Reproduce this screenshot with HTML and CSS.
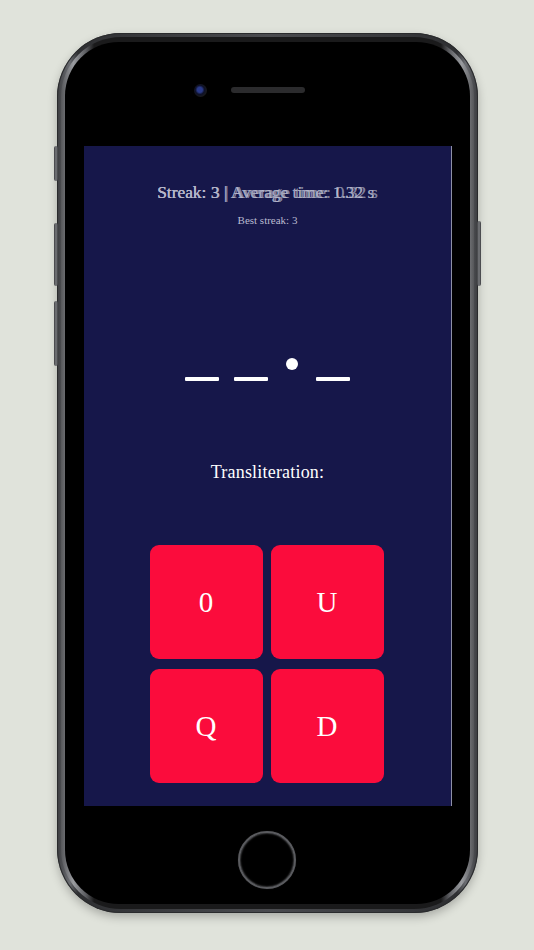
FILE: index.html
```html
<!DOCTYPE html>
<html>
<head>
<meta charset="utf-8">
<link rel="stylesheet" href="styles.css">
</head>
<body>
<div class="stage">
  <div class="phone">
    <span class="btn btn-mute"></span>
    <span class="btn btn-volup"></span>
    <span class="btn btn-voldown"></span>
    <span class="btn btn-power"></span>
    <div class="bezel">
      <div class="face">
        <div class="top">
          <span class="camera"></span>
          <span class="speaker"></span>
        </div>
        <div class="screen">
          <div class="stats">
            <div class="stat-line ghost-a">Streak: 3 | Average time: 1.32 s</div>
            <div class="stat-line ghost-b">Streak: 3 | Average time: 0.32 s</div>
          </div>
          <div class="best">Best streak: 3</div>
          <div class="morse">
            <span class="dash"></span>
            <span class="dash"></span>
            <span class="dot"></span>
            <span class="dash"></span>
          </div>
          <div class="label">Transliteration:</div>
          <div class="answers">
            <button class="tile">0</button>
            <button class="tile">U</button>
            <button class="tile">Q</button>
            <button class="tile">D</button>
          </div>
        </div>
        <div class="bottom">
          <span class="home"></span>
        </div>
      </div>
    </div>
  </div>
</div>
</body>
</html>
```
FILE: styles.css
```css
html, body {
  margin: 0;
  padding: 0;
  background: #e0e3db;
}
body {
  width: 534px;
  height: 950px;
  overflow: hidden;
  font-family: "Liberation Serif", "DejaVu Serif", serif;
}
.stage {
  display: flex;
  justify-content: center;
  padding-top: 33px;
}
.phone {
  position: relative;
  width: 421px;
  height: 880px;
  border-radius: 64px;
  background: linear-gradient(90deg, #3a3b3e 0%, #6b6d72 3%, #2e2f32 5%, #4a4b4f 50%, #2e2f32 95%, #6b6d72 97%, #3a3b3e 100%);
  box-shadow: 0 4px 10px rgba(0,0,0,0.25), inset 0 0 0 1px #2a2b2d;
  padding: 4px;
  box-sizing: border-box;
}
.btn {
  position: absolute;
  width: 4px;
  background: linear-gradient(90deg, #3c3d40, #7a7c80, #3c3d40);
  border-radius: 2px;
}
.btn-mute { left: -3px; top: 113px; height: 35px; }
.btn-volup { left: -3px; top: 190px; height: 63px; }
.btn-voldown { left: -3px; top: 268px; height: 65px; }
.btn-power { right: -3px; top: 188px; height: 65px; }
.bezel {
  height: 100%;
  border-radius: 60px;
  background: linear-gradient(90deg, #555659 0%, #9a9ca0 3%, #5c5d61 6%, #1a1a1b 8%, #1a1a1b 92%, #5c5d61 94%, #9a9ca0 97%, #555659 100%);
  padding: 5px 4px;
  box-sizing: border-box;
}
.face {
  height: 100%;
  border-radius: 54px;
  background: #000;
  display: flex;
  flex-direction: column;
  align-items: center;
  padding: 0 10px;
  box-sizing: border-box;
}
.top {
  height: 104px;
  width: 100%;
  display: flex;
  justify-content: center;
  align-items: center;
  gap: 24px;
  padding: 0 36px 8px 0;
  box-sizing: border-box;
}
.camera {
  width: 13px;
  height: 13px;
  border-radius: 50%;
  background: radial-gradient(circle at 45% 45%, #2a3a8a 0 25%, #0e1128 45%, #1a1a1c 70%);
}
.speaker {
  width: 74px;
  height: 6px;
  border-radius: 3px;
  background: #2b2b2d;
}
.screen {
  width: 368px;
  height: 660px;
  margin-left: 2px;
  background: #16174a;
  border-right: 1px solid #8e90a6;
  box-sizing: border-box;
  display: flex;
  flex-direction: column;
  align-items: center;
  padding-top: 36px;
}
.stats {
  display: grid;
}
.stat-line {
  grid-area: 1 / 1;
  text-align: left;
  font-size: 17.4px;
  line-height: 20px;
  color: #c3c4d6;
  text-shadow: 0 0 0.4px #c3c4d6;
}
.ghost-a { opacity: 0.8; }
.ghost-b { opacity: 0.6; word-spacing: 0.6px; }
.best {
  margin-top: 11px;
  font-size: 11px;
  line-height: 14px;
  color: #b9bad0;
}
.morse {
  margin-top: 133px;
  display: flex;
  align-items: flex-end;
  gap: 15px;
  height: 22px;
}
.dash {
  width: 34px;
  height: 4px;
  background: #fff;
  border-radius: 1px;
  margin-bottom: 1px;
}
.dot {
  width: 12px;
  height: 12px;
  background: #fff;
  border-radius: 50%;
  margin: 0 3px 12px 3px;
}
.label {
  margin-top: 78px;
  font-size: 18px;
  line-height: 24px;
  color: #fff;
  letter-spacing: 0.2px;
}
.answers {
  margin-top: 61px;
  display: grid;
  grid-template-columns: 113px 113px;
  grid-auto-rows: 114px;
  gap: 10px 8px;
  padding-right: 2px;
}
.tile {
  border: none;
  border-radius: 9px;
  background: #fb0c3c;
  color: #fff;
  font-family: "Liberation Serif", serif;
  font-size: 29px;
  padding: 0;
  margin: 0;
}
.bottom {
  flex: 1;
  display: flex;
  align-items: center;
  justify-content: center;
  padding-top: 10px;
}
.home {
  width: 54px;
  height: 54px;
  border-radius: 50%;
  border: 2px solid #5a5b5f;
  box-shadow: inset 0 0 2px #8a8b8f, 0 0 1px #2a2a2a;
  background: #000;
}
```
